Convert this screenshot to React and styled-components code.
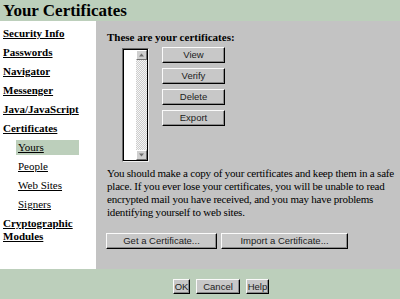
import React from "react";
import styled, { createGlobalStyle } from "styled-components";

const Global = createGlobalStyle`
  html, body { margin: 0; padding: 0; background: #c3c3c3; }
  #root { width: 400px; height: 299px; }
`;

const GREEN = "#bccfbb";
const GRAY = "#c3c3c3";

const Window = styled.div`
  width: 400px;
  height: 299px;
  display: grid;
  grid-template-rows: 21px 1fr 30px;
  font-family: "Liberation Serif", "Times New Roman", serif;
  color: #000;
  overflow: hidden;
`;

const TitleBar = styled.header`
  background: ${GREEN};
  display: flex;
  align-items: center;
  padding-left: 3px;
`;

const Title = styled.h1`
  margin: 0;
  font-size: 17px;
  line-height: 21px;
  font-weight: bold;
`;

const Body = styled.div`
  display: grid;
  grid-template-columns: 96px 1fr;
  min-height: 0;
`;

const Nav = styled.nav`
  background: #fff;
  padding: 6px 0 0 3px;
  display: flex;
  flex-direction: column;
  gap: 6px;
`;

const NavItem = styled.a`
  font-size: 11px;
  line-height: 13px;
  font-weight: ${(p) => (p.$sub ? "normal" : "bold")};
  text-decoration: underline;
  color: #000;
  cursor: pointer;
  ${(p) =>
    p.$sub &&
    `
    margin: -1px 17px -1px 13px;
    padding: 1px 2px;
  `}
  background: ${(p) => (p.$active ? GREEN : "transparent")};
`;

const Content = styled.main`
  background: ${GRAY};
  padding: 10px 4px 0 11px;
  display: flex;
  flex-direction: column;
`;

const Heading = styled.div`
  font-size: 11px;
  line-height: 13px;
  font-weight: bold;
`;

const ListRow = styled.div`
  display: flex;
  align-items: flex-start;
  margin: 4px 0 0 15px;
`;

const ListBox = styled.div`
  width: 27px;
  height: 114px;
  box-sizing: border-box;
  border: 1px solid;
  border-color: #6a6a6a #f0f0f0 #f0f0f0 #6a6a6a;
  box-shadow: inset 1px 1px #000, inset -1px -1px #000;
  background: #fff;
  display: flex;
  justify-content: flex-end;
  padding: 1px;
`;

const ScrollBar = styled.div`
  width: 11px;
  display: flex;
  flex-direction: column;
  justify-content: space-between;
  background-color: #e4e4e4;
  background-image: repeating-conic-gradient(#cdcdcd 0 25%, #f6f6f6 0 50%);
  background-size: 2px 2px;
`;

const ArrowBtn = styled.div`
  height: 10px;
  box-sizing: border-box;
  border: 1px solid;
  border-color: #fff #707070 #707070 #fff;
  background: #cfcfcf;
  display: flex;
  align-items: center;
  justify-content: center;
`;

const ButtonColumn = styled.div`
  display: flex;
  flex-direction: column;
  gap: 5px;
  margin: -1px 0 0 13px;
`;

const PushButton = styled.button`
  width: ${(p) => p.$w}px;
  height: ${(p) => p.$h || 16}px;
  box-sizing: border-box;
  padding: 0;
  border: 1px solid;
  border-color: #fafafa #000 #000 #fafafa;
  box-shadow: inset -1px -1px #8a8a8a;
  background: #c8c8c8;
  font-family: "Liberation Sans", Arial, sans-serif;
  font-size: 9.5px;
  color: #1c1c1c;
  line-height: 1;
  cursor: pointer;
`;

const Paragraph = styled.p`
  margin: 5px 0 0;
  font-size: 11px;
  line-height: 13px;
  letter-spacing: -0.2px;
  white-space: nowrap;
`;

const CertActions = styled.div`
  display: flex;
  gap: 4px;
  margin: 14px 0 0 -1px;
`;

const Footer = styled.footer`
  background: ${GREEN};
  display: flex;
  align-items: flex-start;
  gap: 6px;
  padding: 10px 0 0 173px;
`;

const Arrow = ({ down }) => (
  <svg width="5" height="4" viewBox="0 0 5 4">
    <path d={down ? "M0 0.5 H5 L2.5 3.5 Z" : "M0 3.5 H5 L2.5 0.5 Z"} fill="#6e6e6e" />
  </svg>
);

const navItems = [
  { label: "Security Info" },
  { label: "Passwords" },
  { label: "Navigator" },
  { label: "Messenger" },
  { label: "Java/JavaScript" },
  { label: "Certificates" },
  { label: "Yours", sub: true, active: true },
  { label: "People", sub: true },
  { label: "Web Sites", sub: true },
  { label: "Signers", sub: true },
  { label: "Cryptographic Modules" },
];

export default function App() {
  return (
    <>
      <Global />
      <Window>
        <TitleBar>
          <Title>Your Certificates</Title>
        </TitleBar>
        <Body>
          <Nav>
            {navItems.map((it) => (
              <NavItem key={it.label} $sub={it.sub} $active={it.active}>
                {it.label}
              </NavItem>
            ))}
          </Nav>
          <Content>
            <Heading>These are your certificates:</Heading>
            <ListRow>
              <ListBox>
                <ScrollBar>
                  <ArrowBtn>
                    <Arrow />
                  </ArrowBtn>
                  <ArrowBtn>
                    <Arrow down />
                  </ArrowBtn>
                </ScrollBar>
              </ListBox>
              <ButtonColumn>
                <PushButton $w={63}>View</PushButton>
                <PushButton $w={63}>Verify</PushButton>
                <PushButton $w={63}>Delete</PushButton>
                <PushButton $w={63}>Export</PushButton>
              </ButtonColumn>
            </ListRow>
            <Paragraph>
              You should make a copy of your certificates and keep them in a safe
              <br />
              place. If you ever lose your certificates, you will be unable to read
              <br />
              encrypted mail you have received, and you may have problems
              <br />
              identifying yourself to web sites.
            </Paragraph>
            <CertActions>
              <PushButton $w={111}>Get a Certificate...</PushButton>
              <PushButton $w={127}>Import a Certificate...</PushButton>
            </CertActions>
          </Content>
        </Body>
        <Footer>
          <PushButton $w={17} $h={15}>OK</PushButton>
          <PushButton $w={44} $h={15}>Cancel</PushButton>
          <PushButton $w={23} $h={15}>Help</PushButton>
        </Footer>
      </Window>
    </>
  );
}
